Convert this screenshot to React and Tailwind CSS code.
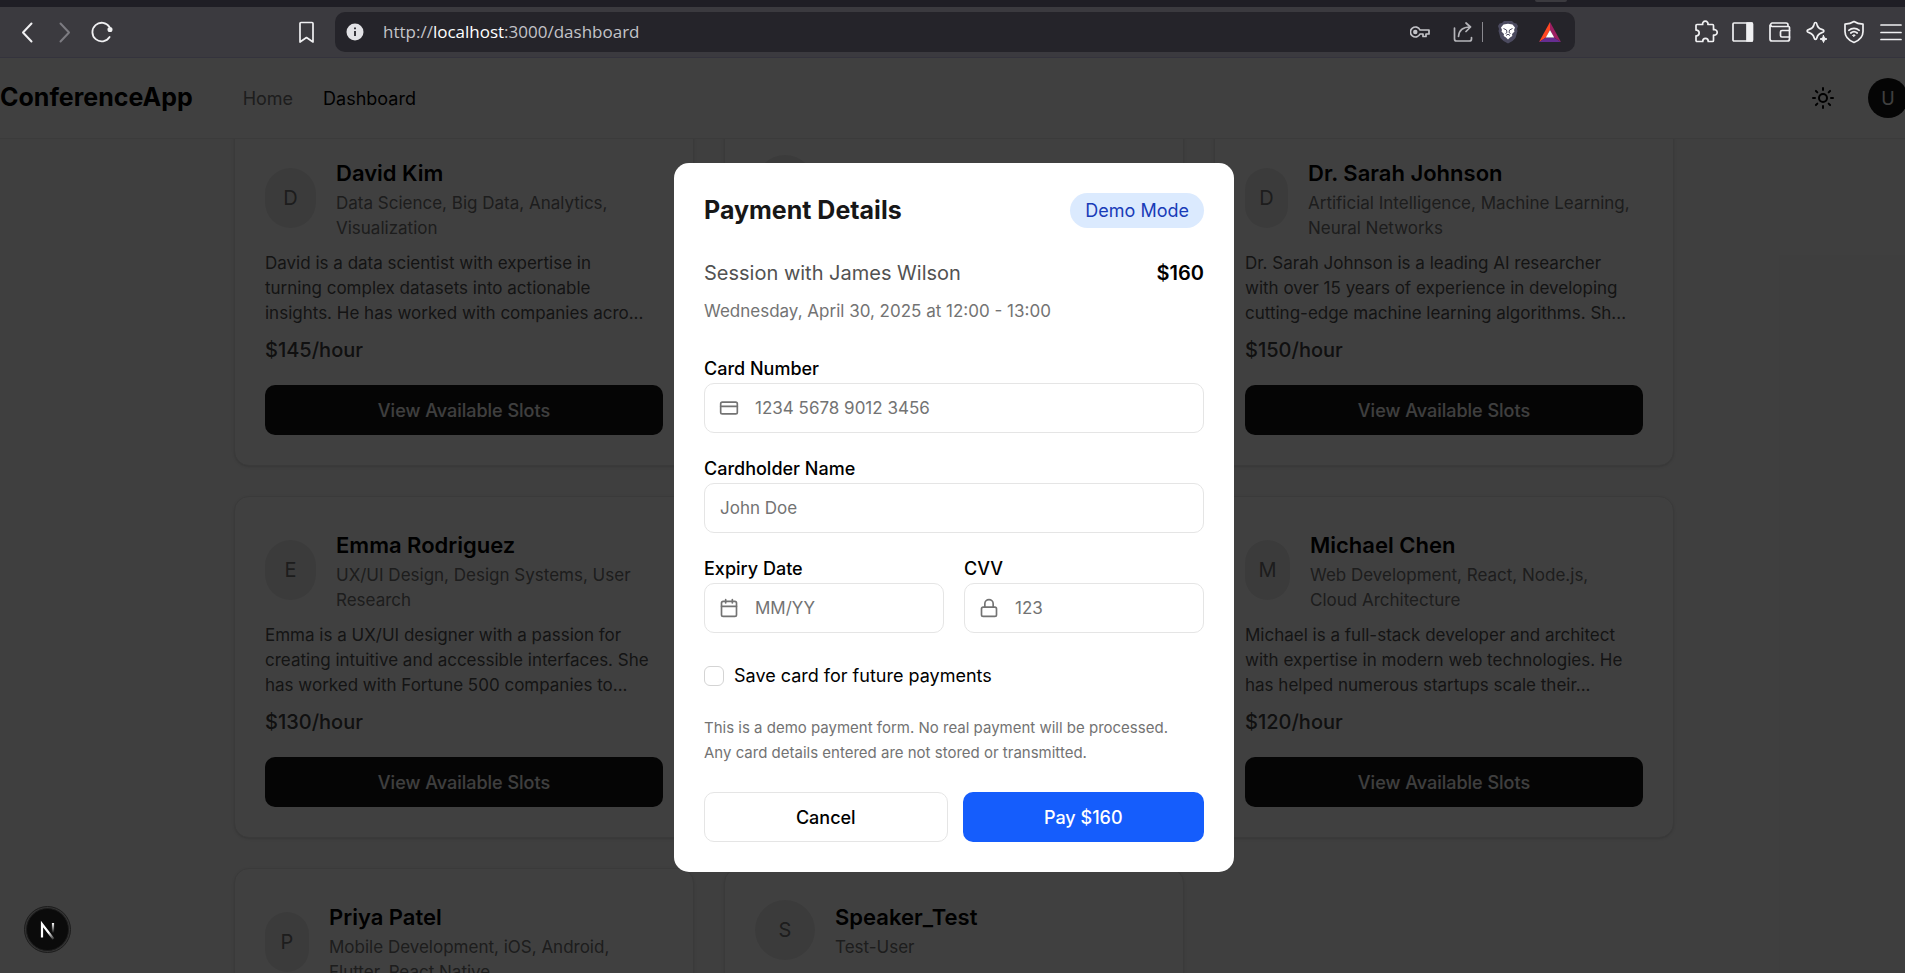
import React from "react";
import { CreditCard, Calendar, Lock, Sun } from "lucide-react";

const speakers = [
  {
    name: "David Kim",
    topics: "Data Science, Big Data, Analytics,\nVisualization",
    bio: "David is a data scientist with expertise in\nturning complex datasets into actionable\ninsights. He has worked with companies acro...",
    rate: 145,
    place: "col-start-1 row-start-1",
    avatar: "w-[51px]",
  },
  { name: "James Wilson", place: "col-start-2 row-start-1", avatar: "w-[60px]" },
  {
    name: "Dr. Sarah Johnson",
    topics: "Artificial Intelligence, Machine Learning,\nNeural Networks",
    bio: "Dr. Sarah Johnson is a leading AI researcher\nwith over 15 years of experience in developing\ncutting-edge machine learning algorithms. Sh...",
    rate: 150,
    place: "col-start-3 row-start-1",
    avatar: "w-[43px]",
  },
  {
    name: "Emma Rodriguez",
    topics: "UX/UI Design, Design Systems, User\nResearch",
    bio: "Emma is a UX/UI designer with a passion for\ncreating intuitive and accessible interfaces. She\nhas worked with Fortune 500 companies to...",
    rate: 130,
    place: "col-start-1 row-start-2",
    avatar: "w-[51px]",
  },
  {
    name: "Michael Chen",
    topics: "Web Development, React, Node.js,\nCloud Architecture",
    bio: "Michael is a full-stack developer and architect\nwith expertise in modern web technologies. He\nhas helped numerous startups scale their...",
    rate: 120,
    place: "col-start-3 row-start-2",
    avatar: "w-[45px]",
  },
  {
    name: "Priya Patel",
    topics: "Mobile Development, iOS, Android,\nFlutter, React Native",
    place: "col-start-1 row-start-3",
    avatar: "w-[44px]",
  },
  { name: "Speaker_Test", topics: "Test-User", place: "col-start-2 row-start-3", avatar: "w-[60px]" },
];

function SpeakerCard({ name, topics, bio, rate, place, avatar }) {
  return (
    <article className={"rounded-[15px] border border-[#e5e5e5] bg-white p-[30px] shadow-sm " + place}>
      <div className="flex items-center gap-5">
        <div className={"flex h-[60px] shrink-0 items-center justify-center rounded-full bg-[#ebebeb] text-[20px] text-[#737373] " + avatar}>
          {name[0]}
        </div>
        <div>
          <h2 className="text-[22px] leading-[36px] font-semibold text-black">{name}</h2>
          {topics && <p className="text-[17px] leading-[25px] whitespace-pre-line text-[#737373]">{topics}</p>}
        </div>
      </div>
      {bio && <p className="mt-[10px] text-[17px] leading-[25px] whitespace-pre-line text-[#525252]">{bio}</p>}
      {rate && <p className="mt-[9px] text-[20px] leading-[30px] font-medium text-[#404040]">{"$" + rate + "/hour"}</p>}
      {rate && (
        <button className="mt-5 h-[50px] w-full rounded-[10px] bg-[#171717] text-[18px] font-medium text-[#fafafa]">
          View Available Slots
        </button>
      )}
    </article>
  );
}

function Field({ id, label, placeholder, icon: Icon }) {
  return (
    <div>
      <label htmlFor={id} className="mb-[2px] block text-[18px] leading-[24px] font-medium text-black">{label}</label>
      <div className="relative">
        {Icon && <Icon className="absolute top-[15px] left-[15px] size-5 text-[#737373]" strokeWidth={2} />}
        <input
          id={id}
          placeholder={placeholder}
          className={"h-[50px] w-full rounded-[10px] border border-[#e5e5e5] bg-white pr-[15px] text-[17px] placeholder:text-[#737373] " + (Icon ? "pl-[50px]" : "pl-[15px]")}
        />
      </div>
    </div>
  );
}

const line = { fill: "none", stroke: "currentColor", strokeWidth: 1.7, strokeLinecap: "round", strokeLinejoin: "round" };

function ToolbarActions() {
  return (
    <div className="ml-[119px] flex shrink-0 items-center gap-[13px] pr-[2px]">
      <button aria-label="Extensions">
        <svg width="24" height="24" viewBox="0 0 24 24" {...line}>
          <path d="M3 4.500H8.700A2.700 2.700 0 1 1 13.900 4.500H18.500a1 1 0 0 1 1 1V9.700A2.800 2.800 0 1 1 19.500 15V20.500a1 1 0 0 1-1 1H14.200V21a2.700 2.700 0 0 0-5.400 0v.500H3a1 1 0 0 1-1-1V15.800h.800a2.900 2.900 0 0 0 0-5.700H2V5.500a1 1 0 0 1 1-1Z" />
        </svg>
      </button>
      <button aria-label="Side panel">
        <svg width="24" height="24" viewBox="0 0 24 24" {...line}>
          <rect x="2" y="3" width="19.500" height="18" rx="1" />
          <path d="M16 3h5v18h-5z" fill="currentColor" />
        </svg>
      </button>
      <button aria-label="Wallet">
        <svg width="24" height="24" viewBox="0 0 24 24" {...line}>
          <path d="M20 6.500V5a2 2 0 0 0-2-2H4a1.800 1.800 0 0 0 0 3.500h16.500a1 1 0 0 1 1 1V19a2 2 0 0 1-2 2H4a2 2 0 0 1-2-2V5" />
          <path d="M21.500 10.500H14a1.500 1.500 0 0 0-1.500 1.500v3.500A1.500 1.500 0 0 0 14 17h7.500" />
        </svg>
      </button>
      <button aria-label="Assistant">
        <svg width="24" height="24" viewBox="0 0 24 24" {...line}>
          <path d="M10.500 2.500c.900 0 1.200.700 1.400 1.700.700 3.100 1.700 4.200 5 5.200 2.700.800 2.700 2.400 0 3.200-3.300 1-4.300 2.100-5 5.200-.500 2.200-2.300 2.200-2.800 0-.700-3.100-1.700-4.200-5-5.200-2.700-.800-2.700-2.400 0-3.200 3.300-1 4.300-2.100 5-5.200.200-1 .500-1.700 1.400-1.700Z" />
          <path d="M18.500 15.500l1 2.500 2.500 1-2.500 1-1 2.500-1-2.500-2.500-1 2.500-1z" fill="currentColor" strokeWidth="1" />
        </svg>
      </button>
      <button aria-label="VPN">
        <svg width="24" height="24" viewBox="0 0 24 24" {...line}>
          <path d="M12 1.500c2.500 1.700 5.500 2.500 9 2.700v7.300c0 5-3.500 8.800-9 11-5.500-2.200-9-6-9-11V4.200c3.500-.200 6.500-1 9-2.700Z" />
          <path d="M6.800 10.300c3-2.700 7.400-2.700 10.400 0M8.800 13c1.900-1.600 4.500-1.600 6.400 0" />
          <path d="M10.800 15.200a2 2 0 0 1 2.400 0L12 16.400z" fill="currentColor" strokeWidth="1" />
        </svg>
      </button>
      <button aria-label="Menu">
        <svg width="24" height="24" viewBox="0 0 24 24" {...line}>
          <path d="M2 5h20M2 12.500h20M2 19.500h20" />
        </svg>
      </button>
    </div>
  );
}

function BrowserBar() {
  return (
    <div className="shrink-0 border-b border-[#34333d] bg-[#3b3a3f]">
      <div className="flex h-[7px] items-start justify-end bg-[#1f1e25] pr-[338px]">
        <div className="h-[2px] w-8 rounded-b-full bg-[#3b3a3f]" />
      </div>
      <div className="flex h-[50px] items-center pl-[15px] text-[#f0f0f2]">
        <div className="flex w-[300px] shrink-0 items-center">
          <button aria-label="Back">
            <svg width="24" height="24" viewBox="0 0 24 24" {...line}><path d="M16.500 3.500 8 12.500l8.500 9" strokeWidth="2" /></svg>
          </button>
          <button aria-label="Forward" className="ml-[13px] text-[#7c7b81]">
            <svg width="24" height="24" viewBox="0 0 24 24" {...line}><path d="M8.500 3.500 17 12.500l-8.500 9" strokeWidth="2" /></svg>
          </button>
          <button aria-label="Reload" className="ml-[14px]">
            <svg width="24" height="24" viewBox="0 0 24 24" {...line}>
              <path d="M19.500 7A9.300 9.300 0 1 0 19.600 17" strokeWidth="1.800" />
              <circle cx="20" cy="9.500" r="1.700" fill="currentColor" />
            </svg>
          </button>
          <button aria-label="Bookmark" className="ml-auto">
            <svg width="18" height="24" viewBox="0 0 18 24" {...line}>
              <path d="M4 2.500h11a1 1 0 0 1 1 1V22l-6.500-4.500L3 22V3.500a1 1 0 0 1 1-1Z" />
            </svg>
          </button>
        </div>
        <div className="ml-5 flex h-10 min-w-0 flex-1 items-center rounded-[10px] bg-[#25242a] pr-[14px] pl-[11px]">
          <svg width="18" height="18" viewBox="0 0 18 18">
            <circle cx="9" cy="9" r="8.500" fill="#e2e2e6" />
            <path d="M9 8v5M9 4.500v1.700" stroke="#25242a" strokeWidth="1.800" />
          </svg>
          <span className="ml-[19px] font-['Open_Sans',sans-serif] text-[17px] text-[#c3c3c8]">
            http://<span className="text-white">localhost</span>:3000/dashboard
          </span>
          <button aria-label="Passwords" className="ml-auto text-[#c3c3c8]">
            <svg width="20" height="20" viewBox="0 0 20 20" {...line}>
              <path d="M10 8a5 5 0 1 0 0 4h3v2.500h3V12h3V8Z" />
              <circle cx="5.300" cy="10" r="1.400" fill="currentColor" />
            </svg>
          </button>
          <button aria-label="Share" className="ml-[23px] text-[#b5b5ba]">
            <svg width="20" height="20" viewBox="0 0 20 20" {...line}>
              <path d="M1.500 6v11a2 2 0 0 0 2 2h13a2 2 0 0 0 2-2v-1.500M5.500 14.500C6 8.500 9.500 5 17 5M13 1l4.500 4-4.500 4.500" />
            </svg>
          </button>
          <div className="ml-[9px] h-5 w-px bg-[#8a898f]" />
          <button aria-label="Shields" className="ml-[15px]">
            <svg width="20" height="24" viewBox="0 0 20 24">
              <path d="M6 1h8l2 2 2.500.500L20 6l-1 3 .500 2-2 7-3 3L10 23.500 5.500 21l-3-3-2-7L1 9 0 6l1.500-2.500L4 3z" fill="#4c4b60" />
              <path d="M5.500 4.500 10 3.800l4.500.700 2.500 3-1 2.500.500 1.500-2.500 2.500.300 2L12 17.500 10 19.500 8 17.500l-2.300-1.500.300-2L3.500 11.500 4 10 3 7.500z" fill="#fff" />
              <path d="M5.500 8.500 8.500 10l.500 2.500-1.500 1M14.500 8.500l-3 1.500-.500 2.500 1.500 1M8 15.500l2-1.300 2 1.300" fill="none" stroke="#4c4b60" strokeWidth="1" />
            </svg>
          </button>
          <button aria-label="Rewards" className="ml-[21px]">
            <svg width="22" height="20" viewBox="0 0 22 20">
              <path d="M11 0 0 20l7-4.500L11 8z" fill="#ff4724" />
              <path d="M11 0l11 20-7-4.500L11 8z" fill="#9e1f63" />
              <path d="M0 20h22l-7-4.500H7z" fill="#662d91" />
              <path d="M11 8l4.200 7.500H6.800z" fill="#fff" />
            </svg>
          </button>
        </div>
        <ToolbarActions />
      </div>
    </div>
  );
}

export default function App() {
  return (
    <div className="relative flex h-screen flex-col overflow-hidden font-['Inter',sans-serif]">
      <BrowserBar />
      <div className="relative -mr-[3px] flex min-h-0 flex-1 flex-col bg-[#f9f9f9]">
        <header className="z-10 flex h-[81px] shrink-0 items-center border-b border-[#ebebeb] bg-white">
          <a href="#" className="text-[25px] font-bold text-black">ConferenceApp</a>
          <nav className="ml-[50px] flex gap-[30px] text-[18px]">
            <a href="#" className="text-[#737373]">Home</a>
            <a href="#" className="text-black">Dashboard</a>
          </nav>
          <button aria-label="Toggle theme" className="ml-auto"><Sun className="size-6" /></button>
          <div className="ml-[33px] flex size-10 items-center justify-center rounded-full bg-[#171717] text-[18px] text-white">U</div>
        </header>
        <main className="min-h-0 flex-1 overflow-hidden">
          <div className="mx-auto -mt-[15px] grid max-w-[1440px] grid-cols-3 gap-[30px]">
            {speakers.map((s) => <SpeakerCard key={s.name} {...s} />)}
          </div>
        </main>
        <div className="absolute inset-x-0 top-0 -bottom-1 z-20 flex items-center justify-center bg-black/75">
          <form role="dialog" aria-label="Payment Details" className="w-[560px] rounded-[15px] bg-white p-[30px]">
            <div className="flex items-center justify-between">
              <h1 className="text-[25px] leading-[35px] font-bold text-[#171717]">Payment Details</h1>
              <span className="rounded-full bg-[#dbeafe] px-[15px] py-[5px] text-[18px] leading-[25px] text-[#193cb8]">Demo Mode</span>
            </div>
            <div className="mt-[30px] flex justify-between text-[20px] leading-[30px]">
              <span className="text-[#525252]">Session with James Wilson</span>
              <span className="font-semibold text-black">$160</span>
            </div>
            <p className="mt-[11px] text-[17px] leading-[25px] text-[#737373]">Wednesday, April 30, 2025 at 12:00 - 13:00</p>
            <div className="mt-[33px] flex flex-col gap-[24px]">
              <Field id="card" label="Card Number" placeholder="1234 5678 9012 3456" icon={CreditCard} />
              <Field id="holder" label="Cardholder Name" placeholder="John Doe" />
              <div className="grid grid-cols-2 gap-5">
                <Field id="expiry" label="Expiry Date" placeholder="MM/YY" icon={Calendar} />
                <Field id="cvv" label="CVV" placeholder="123" icon={Lock} />
              </div>
            </div>
            <div className="mt-[30px] flex items-center gap-[10px]">
              <input id="save" type="checkbox" className="size-5 appearance-none rounded-[6px] border border-[#d4d4d4]" />
              <label htmlFor="save" className="text-[18px] leading-[25px] text-black">Save card for future payments</label>
            </div>
            <p className="mt-[27px] text-[15px] leading-[25px] text-[#737373]">
              This is a demo payment form. No real payment will be processed.
              <br />
              Any card details entered are not stored or transmitted.
            </p>
            <div className="mt-[27px] flex gap-[15px] text-[18px] font-medium">
              <button type="button" className="h-[50px] flex-1 rounded-[10px] border border-[#e5e5e5] bg-white text-black">Cancel</button>
              <button type="button" className="h-[50px] flex-1 rounded-[10px] bg-[#155dfc] text-white">Pay $160</button>
            </div>
          </form>
        </div>
      </div>
      <button aria-label="Developer tools" className="absolute bottom-5 left-6 z-30 flex size-[47px] items-center justify-center rounded-full border border-[#1c1c1c] bg-[#333333]">
        <span className="flex size-[43px] items-center justify-center rounded-full border border-[#1c1c1c] bg-[#0b0b0b]">
          <svg width="20" height="20" viewBox="0 0 20 20" fill="none" strokeWidth="2.200">
            <defs>
              <linearGradient id="stem" x1="0" y1="3" x2="0" y2="13" gradientUnits="userSpaceOnUse">
                <stop stopColor="#fff" />
                <stop offset="1" stopColor="#fff" stopOpacity="0" />
              </linearGradient>
              <linearGradient id="slash" x1="11" y1="12" x2="17" y2="20" gradientUnits="userSpaceOnUse">
                <stop stopColor="#fff" />
                <stop offset="1" stopColor="#fff" stopOpacity="0" />
              </linearGradient>
            </defs>
            <path d="M4 17.500V4L15.500 19" stroke="url(#slash)" />
            <path d="M15 3v10" stroke="url(#stem)" />
          </svg>
        </span>
      </button>
    </div>
  );
}
